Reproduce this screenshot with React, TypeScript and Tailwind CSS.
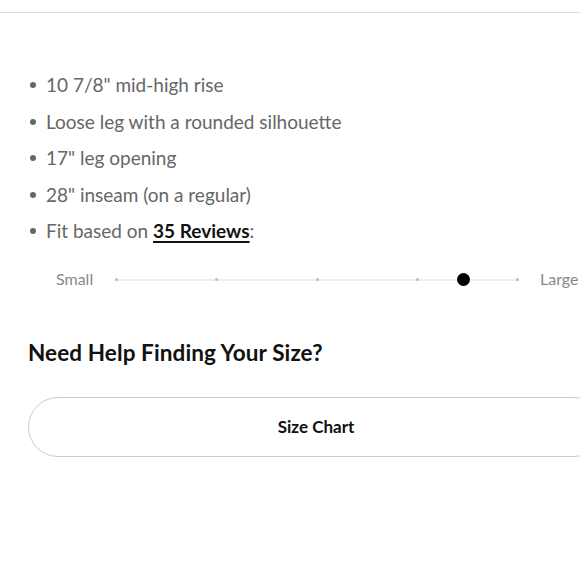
export default function App() {
  const specs = [
    "10 7/8\" mid-high rise",
    "Loose leg with a rounded silhouette",
    "17\" leg opening",
    "28\" inseam (on a regular)",
  ];

  return (
    <div className="w-[580px] h-[580px] overflow-hidden bg-white font-['Lato','Noto_Sans',sans-serif]">
      <div className="mt-[12px] h-px bg-[#dcdcdc]" />

      <div className="ml-[28px] w-[576px] pt-[54px]">
        {/* fit details */}
        <ul className="text-[19px] leading-[36.5px] text-[#666]">
          {specs.map((s) => (
            <li key={s} className="flex items-center">
              <span className="ml-[2px] mr-[10px] h-[6px] w-[6px] rounded-full bg-[#666]" />
              {s}
            </li>
          ))}
          <li className="flex items-center">
            <span className="ml-[2px] mr-[10px] h-[6px] w-[6px] rounded-full bg-[#666]" />
            Fit based on&nbsp;
            <a className="font-bold text-[#111] underline underline-offset-[3px] decoration-[1.5px]">35 Reviews</a>
            <span>:</span>
          </li>
        </ul>

        {/* fit slider */}
        <div className="mt-[20px] flex h-[20px] items-center pl-[28px] text-[16px] leading-[18px] text-[#888]">
          <span className="w-[59px] -translate-y-px">Small</span>
          <div className="relative flex h-[2px] w-[404px] items-center justify-between bg-[#eeeeee]">
            <span className="h-[3px] w-[3px] rounded-full bg-[#bbb]" />
            <span className="h-[3px] w-[3px] rounded-full bg-[#bbb]" />
            <span className="h-[3px] w-[3px] rounded-full bg-[#bbb]" />
            <span className="h-[3px] w-[3px] rounded-full bg-[#bbb]" />
            <span className="h-[3px] w-[3px] rounded-full bg-[#bbb]" />
            <span className="absolute left-[342px] top-[-5.5px] h-[13px] w-[13px] rounded-full bg-black" />
          </div>
          <span className="ml-[21px] -translate-y-px">Large</span>
        </div>

        <h2 className="mt-[49px] text-[22.5px] font-bold leading-[28px] tracking-[0.1px] text-[#111]">
          Need Help Finding Your Size?
        </h2>

        <button className="mt-[30px] flex h-[60px] w-[576px] items-center justify-center rounded-full border-[1.5px] border-[#cccccc] text-[17px] font-bold text-[#111]">
          Size Chart
        </button>
      </div>
    </div>
  );
}
